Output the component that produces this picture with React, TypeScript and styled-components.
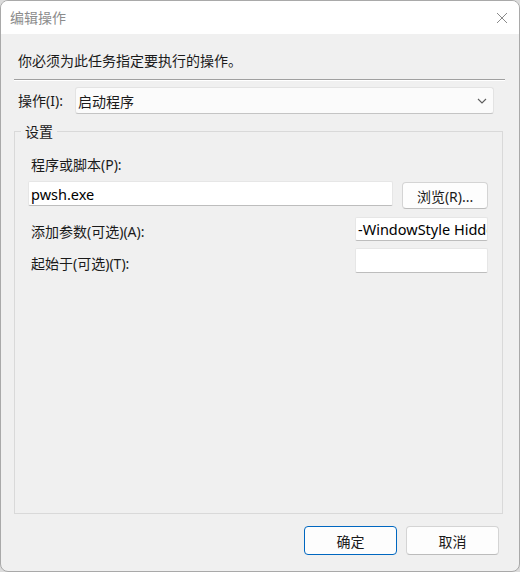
import React from 'react';
import styled, { createGlobalStyle } from 'styled-components';

const GlobalStyle = createGlobalStyle`
  html, body {
    margin: 0;
    padding: 0;
    background: #dcdcdc;
  }
  * {
    box-sizing: border-box;
  }
`;

const FONT = `"Noto Sans", "Noto Sans CJK SC", sans-serif`;

// the dialog frame
const Window = styled.div`
  width: 520px;
  height: 572px;
  display: flex;
  flex-direction: column;
  border: 1px solid #a9a9a9;
  border-radius: 8px;
  overflow: hidden;
  background: #f0f0f0;
  font-family: ${FONT};
  font-size: 14px;
  color: #1a1a1a;
`;

const TitleBar = styled.div`
  height: 33px;
  flex: none;
  display: flex;
  align-items: center;
  justify-content: space-between;
  padding: 0 10px 0 9px;
  background: #ffffff;
`;

const Title = styled.span`
  color: #8c8c8c;
  font-size: 14px;
  line-height: 18px;
`;

const CloseButton = styled.button`
  width: 14px;
  height: 14px;
  padding: 0;
  border: 0;
  background: none;
  display: flex;
  align-items: center;
  justify-content: center;
`;

const Body = styled.div`
  flex: 1;
  display: flex;
  flex-direction: column;
  padding: 0 14px 16px 13px;
`;

const Instruction = styled.div`
  margin: 17px 0 0 4px;
  line-height: 20px;
`;

const Separator = styled.div`
  margin-top: 8px;
  width: 491px;
  height: 2px;
  border-top: 1px solid #a0a0a0;
  border-bottom: 1px solid #ffffff;
`;

const ActionRow = styled.div`
  margin-top: 6px;
  display: grid;
  grid-template-columns: 61px 419px;
  align-items: center;
`;

const ActionLabel = styled.label`
  padding-left: 4px;
  line-height: 18px;
`;

const Combo = styled.div`
  height: 27px;
  display: flex;
  align-items: center;
  justify-content: space-between;
  padding: 0 6px 0 2px;
  background: #fbfbfb;
  border: 1px solid #e3e3e3;
  border-bottom-color: #c4c4c4;
  border-radius: 3px;
`;

const GroupBox = styled.fieldset`
  margin: 8px 2px 0 0;
  padding: 0 14px 0 13px;
  flex: 1;
  min-inline-size: 0;
  border: 1px solid #d9d9d9;
  display: flex;
  flex-direction: column;
`;

const GroupLegend = styled.legend`
  margin-left: -7px;
  padding: 2px 4px 0;
  line-height: 16px;
`;

const FieldLabel = styled.label`
  display: block;
  padding-left: 3px;
  line-height: 18px;
`;

const ProgramLabel = styled(FieldLabel)`
  margin-top: 16px;
`;

const ProgramRow = styled.div`
  margin-top: 7px;
  display: flex;
  align-items: flex-start;
  gap: 9px;
`;

const TextBox = styled.div<{ $width: number; $height: number }>`
  width: ${(p) => p.$width}px;
  height: ${(p) => p.$height}px;
  padding: 0 2px;
  display: flex;
  align-items: center;
  overflow: hidden;
  white-space: nowrap;
  background: #ffffff;
  border: 1px solid #e6e6e6;
  border-bottom-color: #bdbdbd;
  border-radius: 2px;
  font-size: 14.5px;
  color: #000;
`;

const PushButton = styled.button<{ $primary?: boolean }>`
  height: ${(p) => (p.$primary !== undefined ? 29 : 27)}px;
  padding: 0;
  font-family: ${FONT};
  font-size: 14px;
  color: #1a1a1a;
  background: #fdfdfd;
  border: 1px solid ${(p) => (p.$primary ? '#0067c0' : '#d4d4d4')};
  border-bottom-color: ${(p) => (p.$primary ? '#0067c0' : '#bcbcbc')};
  border-radius: 4px;
`;

const BrowseButton = styled(PushButton)`
  width: 86px;
  margin-top: 1px;
`;

const OptionRow = styled.div<{ $gap: number }>`
  margin-top: ${(p) => p.$gap}px;
  display: flex;
  align-items: center;
  justify-content: space-between;

  ${FieldLabel} {
    padding-top: 6px;
  }
`;

const ButtonBar = styled.div`
  margin-top: 12px;
  display: flex;
  justify-content: flex-end;
  gap: 9px;
  padding-right: 6px;
`;

const DialogButton = styled(PushButton)`
  width: 93px;
`;

const Chevron = () => (
  <svg width="10" height="6" viewBox="0 0 10 6">
    <path d="M1 1 L5 5 L9 1" fill="none" stroke="#5f5f5f" strokeWidth="1.1" />
  </svg>
);

const CloseIcon = () => (
  <svg width="12" height="12" viewBox="0 0 12 12">
    <path d="M1 1 L11 11 M11 1 L1 11" stroke="#8a8a8a" strokeWidth="1" />
  </svg>
);

const App: React.FC = () => {
  return (
    <>
      <GlobalStyle />
      <Window>
        <TitleBar>
          <Title>编辑操作</Title>
          <CloseButton aria-label="关闭">
            <CloseIcon />
          </CloseButton>
        </TitleBar>
        <Body>
          <Instruction>你必须为此任务指定要执行的操作。</Instruction>
          <Separator />
          <ActionRow>
            <ActionLabel>操作(I):</ActionLabel>
            <Combo>
              <span>启动程序</span>
              <Chevron />
            </Combo>
          </ActionRow>
          <GroupBox>
            <GroupLegend>设置</GroupLegend>
            <ProgramLabel>程序或脚本(P):</ProgramLabel>
            <ProgramRow>
              <TextBox $width={366} $height={25}>pwsh.exe</TextBox>
              <BrowseButton>浏览(R)...</BrowseButton>
            </ProgramRow>
            <OptionRow $gap={8}>
              <FieldLabel>添加参数(可选)(A):</FieldLabel>
              <TextBox $width={133} $height={24}>-WindowStyle Hidden -File</TextBox>
            </OptionRow>
            <OptionRow $gap={7}>
              <FieldLabel>起始于(可选)(T):</FieldLabel>
              <TextBox $width={133} $height={25} />
            </OptionRow>
          </GroupBox>
          <ButtonBar>
            <DialogButton $primary>确定</DialogButton>
            <DialogButton $primary={false}>取消</DialogButton>
          </ButtonBar>
        </Body>
      </Window>
    </>
  );
};

export default App;
